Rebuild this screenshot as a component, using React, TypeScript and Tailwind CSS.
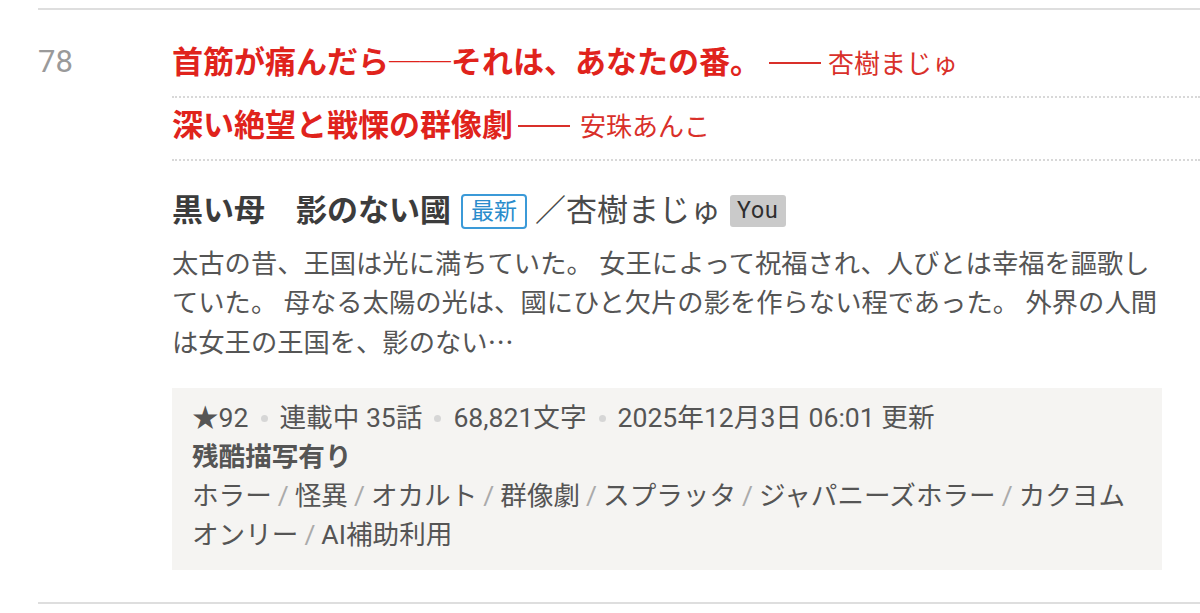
import React from "react";

const FONT = "font-['Roboto','Noto_Sans_CJK_JP',sans-serif]";

const REVIEWS = [
  { title: "首筋が痛んだら──それは、あなたの番。", author: "杏樹まじゅ", gap: "ml-[8px]", gap2: "ml-[7px]" },
  { title: "深い絶望と戦慄の群像劇", author: "安珠あんこ", gap: "ml-[5px]", gap2: "ml-[10px]" },
];

const TAGS = [
  "ホラー",
  "怪異",
  "オカルト",
  "群像劇",
  "スプラッタ",
  "ジャパニーズホラー",
  "カクヨムオンリー",
  "AI補助利用",
];

function Dot() {
  return (
    <span className="inline-block w-[7px] h-[7px] rounded-full bg-[#d6d6d6] mx-[12px] align-middle relative -top-[1px]" />
  );
}

export default function App() {
  return (
    <div className={`${FONT} bg-white w-[1200px] h-[613px] overflow-hidden pt-[8px]`}>
      <div className="ml-[38px] border-t-2 border-b-2 border-[#dedede] flex pb-[32px]">
        {/* rank */}
        <div className="w-[134px] shrink-0 pt-[34px] text-[31px] leading-[36px] text-[#9a9a9a]">
          78
        </div>

        {/* body */}
        <div className="flex-1 min-w-0 pt-[25px]">
          {/* recommended reviews */}
          <ul>
            {REVIEWS.map((r) => (
              <li
                key={r.author}
                className="pt-[9px] pb-[14px] border-b-2 border-dotted border-[#d8d8d8] text-[#e0231c]"
              >
                <div className="h-[38px] flex items-baseline whitespace-nowrap">
                  <span className="text-[31px] leading-[38px] font-bold">{r.title}</span>
                  <span className={`${r.gap} inline-block w-[52px] h-[2px] bg-[#d9302a] self-center`} />
                  <span className={`${r.gap2} text-[26px] leading-[38px] text-[#d9302a]`}>{r.author}</span>
                </div>
              </li>
            ))}
          </ul>

          <div className="pr-[38px]">
            {/* work title */}
            <div className="mt-[28px] flex items-center h-[44px] whitespace-nowrap">
              <span className="text-[31px] leading-[44px] font-bold text-[#3c3c3c]">黒い母　影のない國</span>
              <span className="ml-[10px] border-2 border-[#3b9ad8] rounded-[4px] text-[#2a8ccc] text-[23px] leading-[31px] px-[8px]">
                最新
              </span>
              <span className="ml-[8px] text-[31px] leading-[44px] text-[#4a4a4a]">／杏樹まじゅ</span>
              <span className="ml-[9px] bg-[#cacaca] rounded-[3px] text-[#2e2e2e] text-[23px] leading-[32px] px-[7px] tracking-[0.04em]">
                You
              </span>
            </div>

            {/* intro */}
            <p className="mt-[12px] text-[26.3px] leading-[38.5px] text-[#555]">
              太古の昔、王国は光に満ちていた。 女王によって祝福され、人びとは幸福を謳歌していた。 母なる太陽の光は、國にひと欠片の影を作らない程であった。 外界の人間は女王の王国を、影のない
              <span className="font-['Noto_Sans_CJK_JP',sans-serif]">…</span>
            </p>

            {/* meta box */}
            <div className="mt-[25px] bg-[#f5f4f2] px-[20px] pt-[10px] pb-[16px] text-[26.6px] leading-[39px] text-[#555]">
              <div className="whitespace-nowrap">
                <span>★92</span>
                <Dot />
                <span>連載中 35話</span>
                <Dot />
                <span>68,821文字</span>
                <Dot />
                <span>2025年12月3日 06:01 更新</span>
              </div>
              <div className="font-bold">残酷描写有り</div>
              <div>
                {TAGS.map((t, i) => (
                  <React.Fragment key={t}>
                    {i > 0 && <span className="text-[#aaa] mx-[6px]">/</span>}
                    <span>{t}</span>
                  </React.Fragment>
                ))}
              </div>
            </div>
          </div>
        </div>
      </div>
    </div>
  );
}
